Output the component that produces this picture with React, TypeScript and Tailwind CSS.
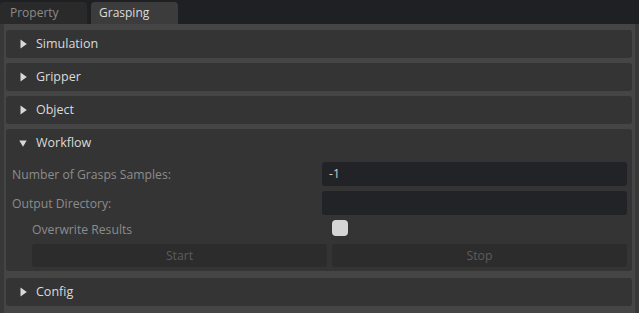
import React from "react";

const font = { fontFamily: '"Open Sans", "Liberation Sans", sans-serif' };

function TriRight() {
  return (
    <svg width="7" height="10" viewBox="0 0 7 10" className="shrink-0">
      <path d="M0.5 0.5 L6.8 5 L0.5 9.5 Z" fill="#d8d8d8" />
    </svg>
  );
}
function TriDown() {
  return (
    <svg width="8" height="7" viewBox="0 0 8 7" className="shrink-0">
      <path d="M0.3 0.5 L7.7 0.5 L4 6.8 Z" fill="#d8d8d8" />
    </svg>
  );
}

function Header({ title, open }: { title: string; open?: boolean }) {
  return (
    <div className="h-[28px] flex items-center pl-[13px] gap-[9px] text-[12.5px] text-[#dadada]">
      <div className="w-[8px] flex justify-center">{open ? <TriDown /> : <TriRight />}</div>
      <span>{title}</span>
    </div>
  );
}

function Collapsed({ title, extra }: { title: string; extra?: string }) {
  return (
    <div className={"bg-[#343434] rounded-[3px] " + (extra ?? "")}>
      <Header title={title} />
    </div>
  );
}

export default function App() {
  return (
    <div className="w-[639px] h-[313px] bg-[#1f2023] flex flex-col overflow-hidden" style={font}>
      <div className="h-[24px] flex items-end gap-[4px] shrink-0">
        <div className="w-[87px] h-[22px] bg-[#2a2a2b] rounded-t-[4px] text-[12px] text-[#8a8a8a] pl-[10px] flex items-center">
          Property
        </div>
        <div className="w-[87px] h-[22px] bg-[#3c3c3c] rounded-t-[4px] text-[12px] text-[#dcdcdc] pl-[8px] flex items-center">
          Grasping
        </div>
      </div>
      <div className="flex-1 bg-[#454545] border-x-[4px] border-[#383838] pl-[2px] pr-[3px] pt-[6px] flex flex-col gap-[5px]">
        <Collapsed title="Simulation" />
        <Collapsed title="Gripper" />
        <Collapsed title="Object" />
        <div className="bg-[#343434] rounded-[3px] pb-[4px]">
          <Header title="Workflow" open />
          <div className="flex flex-col pt-[5px] text-[12.2px] text-[#8c8c8c]">
            <div className="flex items-center h-[24px]">
              <div className="w-[316px] pl-[6px] translate-y-[1px]">Number of Grasps Samples:</div>
              <div className="w-[305px] h-[24px] bg-[#222326] rounded-[3px] flex items-center pl-[7px] text-[#d0d0d0]">
                -1
              </div>
            </div>
            <div className="flex items-center h-[24px] mt-[5px]">
              <div className="w-[316px] pl-[6px] translate-y-[1px]">Output Directory:</div>
              <div className="w-[305px] h-[24px] bg-[#222326] rounded-[3px]"></div>
            </div>
            <div className="flex items-center h-[20px] mt-[3px]">
              <div className="w-[326px] pl-[26px] translate-y-[2px]">Overwrite Results</div>
              <div className="w-[16px] h-[16px] bg-[#d6d6d6] rounded-[4px]"></div>
            </div>
            <div className="flex items-center gap-[5px] pl-[26px] h-[23px] mt-[6px]">
              <div className="w-[295px] h-[23px] bg-[#2c2c2c] rounded-[3px] flex items-center justify-center text-[#5c5c5c]">
                <span className="translate-y-[1px]">Start</span>
              </div>
              <div className="w-[295px] h-[23px] bg-[#2c2c2c] rounded-[3px] flex items-center justify-center text-[#5c5c5c]">
                <span className="translate-y-[1px]">Stop</span>
              </div>
            </div>
          </div>
        </div>
        <Collapsed title="Config" extra="mt-[2px]" />
      </div>
    </div>
  );
}
